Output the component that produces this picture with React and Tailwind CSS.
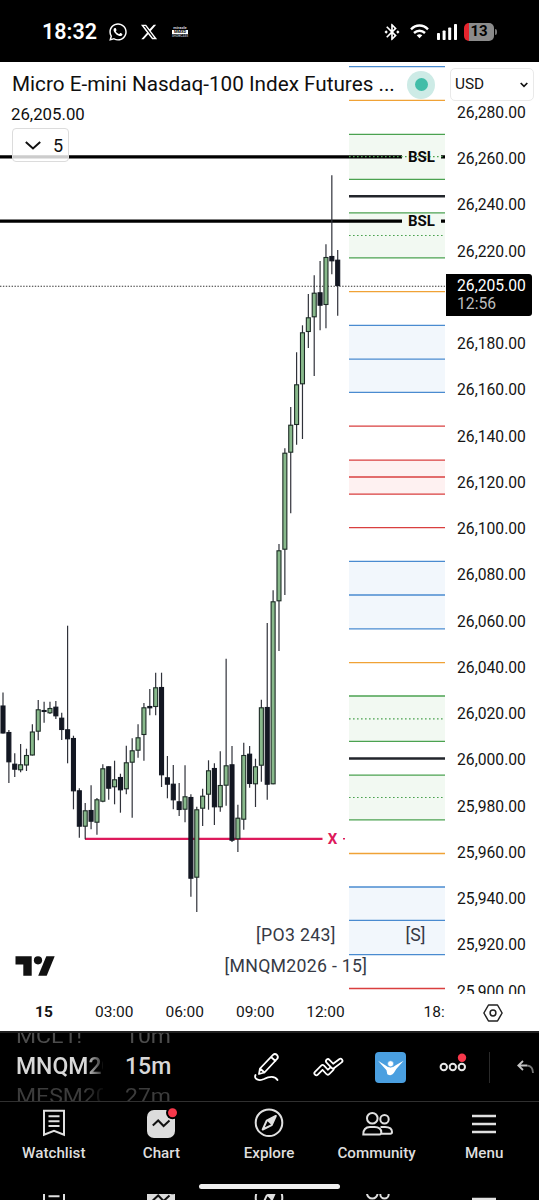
import { FaWhatsapp, FaXTwitter } from "react-icons/fa6";
import { MdBluetoothConnected } from "react-icons/md";

const UP = 1;
const DOWN = 0;

// [direction, bodyTop, bodyBottom, high, low]
const CANDLES = [
    [DOWN, 705.5, 733.5, 692.5, 733.5],
    [DOWN, 732, 762.3, 730, 783],
    [DOWN, 763.7, 769.7, 753.3, 777],
    [UP, 764.3, 770.3, 744, 772.3],
    [UP, 755, 765.5, 748.7, 771],
    [UP, 731.5, 755.5, 724.3, 755.5],
    [UP, 709.3, 731.7, 700, 740.3],
    [DOWN, 710, 711.7, 701.7, 722.7],
    [UP, 708, 713.3, 701.7, 714],
    [DOWN, 706.7, 716.3, 701, 719],
    [DOWN, 717.7, 730, 712.7, 740],
    [DOWN, 729.3, 739.3, 625.7, 763.3],
    [DOWN, 738, 791.3, 735.7, 809.3],
    [DOWN, 790.3, 826.7, 788.3, 837.7],
    [UP, 810.3, 826.7, 803, 839.3],
    [DOWN, 810, 821.7, 785.3, 829.3],
    [UP, 799.3, 822.7, 798, 834.7],
    [UP, 768.3, 801.7, 764.3, 802.3],
    [DOWN, 766.3, 788.7, 766.3, 799.7],
    [UP, 779.3, 787.3, 760.7, 804.3],
    [DOWN, 777, 790.3, 773.7, 812.7],
    [UP, 762.3, 789.3, 745.7, 794.3],
    [UP, 750.3, 762.7, 738.3, 817.7],
    [UP, 737.3, 750.7, 724.3, 757.7],
    [UP, 707.3, 735, 703, 760.7],
    [DOWN, 706, 708.3, 689, 715.3],
    [UP, 687.3, 707, 672.7, 715.3],
    [DOWN, 687, 775.3, 672.7, 787],
    [DOWN, 777.3, 784.7, 756, 798.3],
    [DOWN, 783.7, 800.3, 765, 809.3],
    [DOWN, 801.3, 810, 783, 816],
    [UP, 796.3, 809.7, 765.3, 822.3],
    [DOWN, 797, 878.7, 794.3, 896.7],
    [UP, 809.3, 877.7, 806.7, 912],
    [UP, 795.7, 808.7, 788.7, 826],
    [UP, 770.3, 794.7, 760.3, 809.7],
    [DOWN, 768, 807.3, 763.3, 825],
    [UP, 785, 807.3, 751.3, 811.7],
    [UP, 765.3, 785.7, 658.7, 805.7],
    [DOWN, 764.3, 840.7, 746, 842],
    [UP, 817.7, 839.3, 804.7, 852],
    [UP, 755, 819.7, 742.7, 829.7],
    [DOWN, 753.7, 784, 746, 787.7],
    [UP, 766.3, 784.3, 758.7, 807],
    [UP, 707.3, 765.7, 699.7, 781.7],
    [DOWN, 707, 784.7, 623, 799.7],
    [UP, 601.3, 784.3, 590.3, 784.3],
    [UP, 550.3, 601.3, 544, 651],
    [UP, 452.7, 549.7, 448.3, 595],
    [UP, 424.7, 452.7, 407, 513.3],
    [UP, 384.3, 425, 352.3, 444.7],
    [UP, 332.3, 384.3, 325.3, 439],
    [UP, 317.3, 332, 294, 348],
    [UP, 292.7, 317.3, 275.3, 376],
    [DOWN, 292.3, 305.7, 261, 330.3],
    [UP, 257, 305, 244.3, 328.3],
    [DOWN, 256, 261.3, 175.3, 274.3],
    [DOWN, 259.7, 286, 250, 315.7],
];

const BLUE = "#4a8bd0";
const ORANGE = "#f0a236";
const GREEN = "#4ba250";
const RED = "#d93f3f";
const DARK = "#22252b";

const ZONES = [
    [134.3, 179.3, "#f2f9f2"],
    [212.8, 257.8, "#f2f9f2"],
    [325.3, 392.4, "#f2f7fc"],
    [460.2, 494.2, "#fef1f1"],
    [561.3, 628.7, "#f2f7fc"],
    [696, 741.3, "#f2f9f2"],
    [775.2, 819.7, "#f2f9f2"],
    [887, 954.8, "#f2f7fc"],
];

const LEVELS = [
    [66.6, BLUE], [100.4, ORANGE], [134.3, GREEN], [179.3, GREEN], [196.3, DARK],
    [212.8, GREEN], [257.8, GREEN], [291.6, ORANGE], [325.3, BLUE], [359.2, BLUE],
    [392.4, BLUE], [426.2, RED], [460.2, RED], [477, RED], [494.2, RED], [527.6, RED],
    [561.3, BLUE], [595, BLUE], [628.8, BLUE], [662.6, ORANGE], [696, GREEN],
    [741.3, GREEN], [758.5, DARK], [775.2, GREEN], [819.8, GREEN], [853.5, ORANGE],
    [887, BLUE], [920.4, BLUE], [954.6, BLUE], [988.5, RED],
];

const MIDLINES = [156.7, 235.5, 718.8, 797.5];

// the empty slot sits behind the last price tag
const PRICES = [
    "26,280.00", "26,260.00", "26,240.00", "26,220.00", "", "26,180.00", "26,160.00",
    "26,140.00", "26,120.00", "26,100.00", "26,080.00", "26,060.00", "26,040.00", "26,020.00",
    "26,000.00", "25,980.00", "25,960.00", "25,940.00", "25,920.00", "25,900.00",
];

function StatusBar() {
    return (
        <div className="flex h-[62px] shrink-0 items-center bg-black pl-[42px] pr-[42px] pt-px text-white">
            <span className="w-[55px] text-[21.5px] font-semibold leading-none">18:32</span>
            <FaWhatsapp className="ml-[11px] size-[20px]" />
            <FaXTwitter className="ml-[12px] size-[18px]" />
            <div className="ml-[14px] flex w-[16px] flex-col items-center text-center font-bold">
                <span className="text-[4px] leading-[4px] text-gray-300">miracle</span>
                <span className="w-full bg-white text-[4px] leading-[4px] text-black">MMXD</span>
                <span className="text-[3px] leading-[4px] text-gray-400">SHOWCASE</span>
            </div>
            <div className="ml-auto flex items-center">
                <MdBluetoothConnected className="size-[20px]" />
                <svg className="ml-[8px] h-[15px] w-[19px]" viewBox="0 0 19 15" fill="none" stroke="white" strokeWidth="2.4">
                    <path d="M1 5.3C6 .3 13 .3 18 5.3M4 9C7.2 6 11.8 6 15 9" />
                    <path d="M6.7 11.3q2.8-2 5.6 0L9.5 14.3z" fill="white" stroke="none" />
                </svg>
                <svg className="ml-[8px] h-[16px] w-[20px]" viewBox="0 0 20 16" fill="white">
                    <rect x="0" y="9" width="3" height="7" rx=".8" />
                    <rect x="5.6" y="6.5" width="3" height="9.5" rx=".8" />
                    <rect x="11.2" y="3.5" width="3" height="12.5" rx=".8" />
                    <rect x="17" y="0" width="3" height="16" rx=".8" />
                </svg>
                <div className="ml-[7px] flex h-[18px] w-[30px] items-center justify-center overflow-hidden rounded-[5px] bg-linear-to-r from-[#e5242d] from-[16%] to-[#8b8b8b] to-[16%] text-[15px] font-bold text-black">13</div>
                <div className="ml-[1px] h-[6px] w-[2px] rounded-r bg-[#777]"></div>
            </div>
        </div>
    );
}

function Chart() {
    return (
        <svg className="block h-[932px] w-[445px]" viewBox="0 62 445 932" fontFamily="Roboto, sans-serif">
            {ZONES.map(([top, bottom, fill]) => (
                <rect key={top} x="349" y={top} width="96" height={bottom - top} fill={fill} />
            ))}

            {/* Liquidity lines */}
            <path d="M0 156.8H402M441 156.8H445M0 221.2H402M441 221.2H445" stroke="#000" strokeWidth="3.2" />
            <path d="M85 838.8H322.5" stroke="#dd1a5b" strokeWidth="2.2" />
            <path d="M343 838.8H345" stroke="#dd1a5b" strokeWidth="1.5" />

            {MIDLINES.map((y) => (
                <path key={y} d={`M349 ${y}H445`} stroke={GREEN} strokeWidth="1.2" strokeDasharray="1.6 2.4" />
            ))}
            {LEVELS.map(([y, color]) => (
                <path key={y} d={`M349 ${y}H445`} stroke={color} strokeWidth={color === DARK ? 2.4 : 1.3} />
            ))}
            <path d="M0 286.2H445" stroke="#333" strokeWidth="1.1" strokeDasharray="1.4 1.5" />

            {CANDLES.map(([dir, top, bottom, high, low], i) => {
                const x = 3 + i * 5.872;
                return (
                    <g key={i}>
                        <path d={`M${x} ${high}V${low}`} stroke="#30323a" strokeWidth="1.2" />
                        <rect
                            x={x - 2}
                            y={top + 0.5}
                            width="4"
                            height={Math.max(bottom - top - 1, 1)}
                            fill={dir === UP ? "#88b98b" : "#131722"}
                            stroke={dir === UP ? "#1d2b26" : "#131722"}
                            strokeWidth="1.1"
                        />
                    </g>
                );
            })}

            <g fontSize="15" fontWeight="700" textAnchor="middle" fill="#0a0a0a">
                <text x="421.5" y="162.3">BSL</text>
                <text x="421.5" y="226.3">BSL</text>
                <text x="332.5" y="844.2" fill="#dd1a5b">X</text>
            </g>
            <g fontSize="17.7" fill="#363a45">
                <text x="256" y="940.5" textLength="79.5">[PO3 243]</text>
                <text x="405.5" y="940.5" textLength="20">[S]</text>
                <text x="224.5" y="971.5" textLength="142.5">[MNQM2026 - 15]</text>
            </g>

            {/* TradingView mark */}
            <g fill="#111">
                <path d="M15.5 956.3H31.7V975.8H23.3V964.5H15.5z" />
                <circle cx="38" cy="960.3" r="4.1" />
                <path d="M46.3 956.3H54.7L46.7 975.8H38.2z" />
            </g>
        </svg>
    );
}

function ChartHeader() {
    return (
        <div className="absolute left-0 top-0 w-[445px] text-[#0f0f0f]">
            <div className="flex h-[45px] items-center pl-[12px]">
                <span className="w-[384px] whitespace-nowrap text-[20.7px]">Micro E-mini Nasdaq-100 Index Futures ...</span>
                <span className="ml-[11px] flex size-[28px] items-center justify-center rounded-full bg-[#cdebe6]">
                    <span className="size-[13px] rounded-full bg-[#42bda8]"></span>
                </span>
            </div>
            <div className="-mt-[5px] pl-[11px] text-[16.8px] leading-[24px]">26,205.00</div>
            <div className="ml-[12px] mt-[2px] flex h-[34px] w-[57px] items-center rounded-[4px] border border-[#dcdcdc] bg-white/80 pl-[12px]">
                <svg className="h-[9px] w-[16px]" viewBox="0 0 16 9" fill="none" stroke="#111" strokeWidth="2">
                    <path d="M.8 1L8 7.4L15.2 1" />
                </svg>
                <span className="ml-[12px] text-[18px]">5</span>
            </div>
        </div>
    );
}

function PriceAxis() {
    return (
        <div className="relative h-[932px] w-[94px] overflow-hidden pt-[27.6px] text-[#151515]">
            {PRICES.map((p) => (
                <div key={p} className="flex h-[46.25px] items-center pl-[12px] text-[15.7px]">{p}</div>
            ))}
            <div className="absolute left-[5px] top-[6px] flex h-[33px] w-[84px] items-center justify-between rounded-[5px] border border-[#e9e9e9] bg-white pl-[4px] pr-[5px] text-[15.4px]">
                USD
                <svg className="h-[6px] w-[8px]" viewBox="0 0 8 6" fill="none" stroke="#111" strokeWidth="1.7">
                    <path d="M.7 1L4 4.3L7.3 1" />
                </svg>
            </div>
            <div className="absolute left-[1px] top-[212px] flex h-[42px] w-[86px] flex-col justify-center rounded-r-[3px] bg-black pl-[11px] text-white">
                <span className="text-[15.7px] leading-[18.5px]">26,205.00</span>
                <span className="text-[15.7px] leading-[18.5px] text-[#bdbdbd]">12:56</span>
            </div>
        </div>
    );
}

function TimeAxis() {
    return (
        <div className="flex h-[37px] shrink-0 items-center pt-px text-[15.5px] text-[#151515]">
            <span className="ml-[9px] w-[70px] text-center font-bold">15</span>
            <span className="w-[70.5px] text-center">03:00</span>
            <span className="w-[70.5px] text-center">06:00</span>
            <span className="w-[70.5px] text-center">09:00</span>
            <span className="w-[70px] text-center">12:00</span>
            <span className="ml-[63px] w-[24px]">18:</span>
            <svg className="ml-[35px] h-[18px] w-[20px]" viewBox="0 0 20 18" fill="none" stroke="#222" strokeWidth="1.5">
                <path d="M5.5 1H14.5L19.1 9L14.5 17H5.5L.9 9z" strokeLinejoin="round" />
                <circle cx="10" cy="9" r="2.9" />
            </svg>
        </div>
    );
}

function Wheel({ className, prev, current, next }) {
    return (
        <div className={`flex flex-col overflow-hidden whitespace-nowrap text-[23px] leading-[30px] ${className}`}>
            <span className="-mt-[11px] scale-y-85 text-[#4c4c4c]">{prev}</span>
            <span className="font-medium text-[#d8d8d8]">{current}</span>
            <span className="scale-y-85 text-[#3c3c3c]">{next}</span>
        </div>
    );
}

function Toolbar() {
    return (
        <div className="flex h-[70px] shrink-0 items-center overflow-hidden border-t-2 border-[#202020] bg-black">
            <Wheel className="ml-[16px] h-[68px] w-[87px] mask-r-from-[80%] mask-r-to-[105%]" prev="MCL1!" current="MNQM2026" next="MESM2026" />
            <Wheel className="ml-[22px] h-[68px] w-[60px]" prev="10m" current="15m" next="27m" />
            <svg className="ml-[69px] h-[32px] w-[28px]" viewBox="0 0 28 32" fill="none" stroke="white" strokeWidth="1.8" strokeLinecap="round" strokeLinejoin="round">
                <path d="M6 17.5L19 3.8Q21 2 23 4Q24.8 6 23 8L10.5 21.5L5 23zM17 6L21.5 10M6 17.5L10.5 21.5" />
                <path d="M1.5 24C-.5 28 5 30.5 10 28C15 25.3 21 24.5 23.5 29" />
            </svg>
            <svg className="ml-[31px] h-[20px] w-[31px]" viewBox="0 0 31 20" fill="none" strokeLinecap="round" strokeLinejoin="round">
                <path d="M3.4 16.2L9.6 10L14.8 15.6L18.6 12" stroke="white" strokeWidth="5.8" />
                <path d="M3.4 16.2L9.6 10L14.8 15.6L18.6 12" stroke="black" strokeWidth="2.3" />
                <path d="M15 4.2L20 9.4L27.4 3.8" stroke="white" strokeWidth="5.8" />
                <path d="M15 4.2L20 9.4L27.4 3.8" stroke="black" strokeWidth="2.3" />
            </svg>
            <div className="ml-[31px] flex size-[31px] items-center justify-center rounded-[4px] bg-[#4a9fe0]">
                <svg className="size-[31px]" viewBox="0 0 31 31" fill="white">
                    <path d="M3 8.8L10.3 13.2Q15.5 18 20.7 13.2L28.6 8.8L21.3 17L18.8 21Q16.5 24.5 12.3 22.3L11.5 18.3z" />
                    <circle cx="15.6" cy="11.8" r="3" stroke="#4a9fe0" strokeWidth=".6" />
                </svg>
            </div>
            <svg className="ml-[33px] h-[30px] w-[28px]" viewBox="0 0 28 30" fill="none" stroke="#e8e8e8" strokeWidth="2">
                <circle cx="4.8" cy="15" r="3.2" />
                <circle cx="13.8" cy="15" r="3.2" />
                <circle cx="22.8" cy="15" r="3.2" />
                <circle cx="23" cy="5.7" r="4.2" fill="#f7384b" stroke="none" />
            </svg>
            <div className="ml-[22px] h-[31px] w-px shrink-0 bg-[#2a2a2a]"></div>
            <svg className="ml-[27px] h-[14px] w-[17px] shrink-0" viewBox="0 0 17 14" fill="none" stroke="#c4c4c4" strokeWidth="1.8">
                <path d="M6 1L1.3 5.5L6 10M1.3 5.5H10" />
                <path d="M10 5.5Q16 6 16 13" stroke="#777" />
            </svg>
        </div>
    );
}

const ICONS = {
    Watchlist: (
        <>
            <path d="M6 2.8H26V26.7L16 22.8L6 26.7z" />
            <path d="M10.5 8.3H21.5M10.5 13.2H21.5M10.5 18H21.5" />
        </>
    ),
    Chart: (
        <>
            <rect x="2" y="2" width="28" height="28" rx="7" fill="#dcdcdc" stroke="none" />
            <path d="M7.8 17.5L13.2 12.5L18.6 18L24.5 12.5" stroke="#111" />
            <circle cx="27.5" cy="4.7" r="6.5" fill="black" stroke="none" />
            <circle cx="27.5" cy="4.7" r="4.5" fill="#f7384b" stroke="none" />
        </>
    ),
    Explore: (
        <>
            <circle cx="16" cy="14.7" r="13.3" />
            <path d="M22.8 8L13.7 12.6L19 17.5z" fill="#e0e0e0" stroke="none" />
            <path d="M22.8 8L13.7 12.6L9.7 21.5L18.7 17.2z" strokeLinejoin="round" />
        </>
    ),
    Community: (
        <>
            <circle cx="11.3" cy="10.2" r="5.3" />
            <circle cx="23.5" cy="11.2" r="4.2" />
            <path d="M2.3 26.5Q2.3 19 9 19H13.5Q20.3 19 20.3 24.5Q20.3 26.5 18.5 26.5z" />
            <path d="M19.5 19H24Q31 19 31 24Q31 25.7 29.3 25.7H20.5" />
        </>
    ),
    Menu: <path d="M4 8H28M4 16H28M4 24H28" strokeWidth="2.7" />,
};

const TABS = ["Watchlist", "Chart", "Explore", "Community", "Menu"];

function TabIcon({ name }) {
    return (
        <svg className="size-[32px] shrink-0 overflow-visible" viewBox="0 0 32 32" fill="none" stroke="#e0e0e0" strokeWidth="2">
            {ICONS[name]}
        </svg>
    );
}

function TabBar() {
    return (
        <div className="flex h-[99px] shrink-0 flex-col border-t border-[#303030] bg-black text-[#dedede]">
            <div className="grid h-[82px] w-[538px] grid-cols-5 pt-[6px]">
                {TABS.map((name) => (
                    <div key={name} className="flex flex-col items-center">
                        <TabIcon name={name} />
                        <span className="mt-[3px] text-[15.2px] font-medium leading-[20px]">{name}</span>
                    </div>
                ))}
            </div>
            <div className="mx-auto h-[5px] w-[141px] rounded-full bg-[#f0f0f0]"></div>
            {/* Sliver of the next row under the home indicator */}
            <div className="mt-auto grid h-[6px] w-[538px] grid-cols-5 overflow-hidden">
                {TABS.map((name) => (
                    <div key={name} className="-mt-[11px] flex justify-center">
                        <TabIcon name={name} />
                    </div>
                ))}
            </div>
        </div>
    );
}

export default function App() {
    return (
        <div className="flex h-[1200px] w-[539px] flex-col overflow-hidden bg-white font-[Roboto,sans-serif]">
            <StatusBar />
            <div className="relative flex h-[932px] shrink-0">
                <Chart />
                <PriceAxis />
                <ChartHeader />
            </div>
            <TimeAxis />
            <Toolbar />
            <TabBar />
        </div>
    );
}
